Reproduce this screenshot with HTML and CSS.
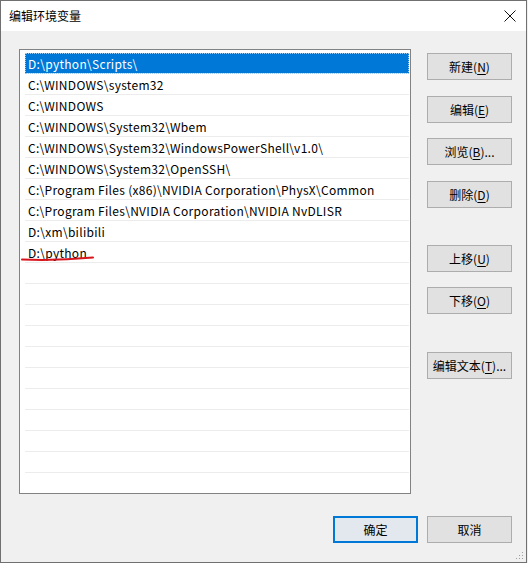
FILE: index.html
```html
<!DOCTYPE html>
<html lang="zh-CN">
<head>
  <meta charset="utf-8">
  <link rel="stylesheet" href="styles.css">
  <title>编辑环境变量</title>
</head>
<body>

  <div class="window">
    <div class="titlebar">
      <span class="title">编辑环境变量</span>
      <svg class="close" width="12" height="12" viewBox="0 0 12 12">
        <path d="M0.5 0.5 L11.5 11.5 M11.5 0.5 L0.5 11.5" stroke="#111" stroke-width="1" fill="none"/>
      </svg>
    </div>

    <div class="body">
      <div class="main">
        <div class="pathlist">
          <div class="row selected"><span>D:\python\Scripts\</span></div>
          <div class="row">C:\WINDOWS\system32</div>
          <div class="row">C:\WINDOWS</div>
          <div class="row">C:\WINDOWS\System32\Wbem</div>
          <div class="row">C:\WINDOWS\System32\WindowsPowerShell\v1.0\</div>
          <div class="row">C:\WINDOWS\System32\OpenSSH\</div>
          <div class="row">C:\Program Files (x86)\NVIDIA Corporation\PhysX\Common</div>
          <div class="row">C:\Program Files\NVIDIA Corporation\NVIDIA NvDLISR</div>
          <div class="row">D:\xm\bilibili</div>
          <div class="row">D:\python</div>
          <div class="row"></div>
          <div class="row"></div>
          <div class="row"></div>
          <div class="row"></div>
          <div class="row"></div>
          <div class="row"></div>
          <div class="row"></div>
          <div class="row"></div>
          <div class="row"></div>
          <div class="row"></div>
          <div class="row"></div>
        </div>

        <div class="side">
          <button class="btn">新建(<u>N</u>)</button>
          <button class="btn">编辑(<u>E</u>)</button>
          <button class="btn">浏览(<u>B</u>)...</button>
          <button class="btn">删除(<u>D</u>)</button>
          <button class="btn">上移(<u>U</u>)</button>
          <button class="btn">下移(<u>O</u>)</button>
          <button class="btn">编辑文本(<u>T</u>)...</button>
        </div>
      </div>

      <div class="footer">
        <button class="btn default">确定</button>
        <button class="btn">取消</button>
      </div>
    </div>

    <!-- red pen stroke under the new entry -->
    <svg class="mark" width="528" height="563" viewBox="0 0 528 563">
      <path d="M22 259.5 Q 55 261 93 257.5" stroke="#d8141c" stroke-width="2" fill="none" stroke-linecap="round"/>
    </svg>

    <svg class="grip" width="8" height="8" viewBox="0 0 8 8">
      <rect x="6" y="0" width="1" height="1" fill="#a0a0a0"/>
      <rect x="3" y="3" width="1" height="1" fill="#a0a0a0"/>
      <rect x="6" y="3" width="1" height="1" fill="#a0a0a0"/>
      <rect x="0" y="6" width="1" height="1" fill="#a0a0a0"/>
      <rect x="3" y="6" width="1" height="1" fill="#a0a0a0"/>
      <rect x="6" y="6" width="1" height="1" fill="#a0a0a0"/>
    </svg>
  </div>

</body>
</html>
```

FILE: styles.css
```css
body {
  margin: 0;
  background: #f0f0f0;
  font-family: "Noto Sans CJK SC", "Noto Sans", sans-serif;
  font-size: 12px;
  color: #000;
}

.window {
  position: relative;
  width: 527px;
  height: 563px;
  box-sizing: border-box;
  border: 1px solid #707070;
  background: #f0f0f0;
  overflow: hidden;
}

.titlebar {
  height: 30px;
  background: #fff;
  display: flex;
  align-items: center;
  padding-left: 8px;
}

.title {
  flex: 1;
  line-height: 16px;
}

.close {
  margin-right: 10px;
}

.body {
  padding: 18px 14px 0 18px;
}

.main {
  display: flex;
  gap: 16px;
}

.pathlist {
  width: 392px;
  height: 445px;
  box-sizing: border-box;
  border: 1px solid #828282;
  background: #fff;
  padding: 3px 1px 0 5px;
  overflow: hidden;
}

.row {
  height: 20px;
  line-height: 21px;
  border-bottom: 1px solid #ececec;
  padding-left: 3px;
  white-space: nowrap;
  letter-spacing: 0.3px;
}

.row.selected {
  background: #0078d7;
  color: #fff;
  outline: 1px dotted #9fcdf2;
  outline-offset: -1px;
}

.side {
  width: 85px;
  display: flex;
  flex-direction: column;
  padding-top: 4px;
}

/* spacing between the buttons, groups get a wider gap */
.side .btn { margin-top: 16px; }
.side .btn:nth-child(1) { margin-top: 0; }
.side .btn:nth-child(3) { margin-top: 15px; }
.side .btn:nth-child(5) { margin-top: 37px; }
.side .btn:nth-child(6) { margin-top: 15px; }
.side .btn:nth-child(7) { margin-top: 38px; }

.btn {
  width: 85px;
  height: 27px;
  box-sizing: border-box;
  border: 1px solid #adadad;
  background: #e1e1e1;
  font-family: inherit;
  font-size: 12px;
  color: #000;
  padding: 0;
  line-height: 16px;
}

.btn u {
  text-underline-offset: 2px;
}

.footer {
  display: flex;
  justify-content: flex-end;
  gap: 9px;
  margin-top: 22px;
}

.btn.default {
  border: 2px solid #0078d7;
  background: #e3e8ee;
}

.mark {
  position: absolute;
  left: -1px;
  top: -1px;
  pointer-events: none;
}

.grip {
  position: absolute;
  right: 2px;
  bottom: 2px;
}
```
